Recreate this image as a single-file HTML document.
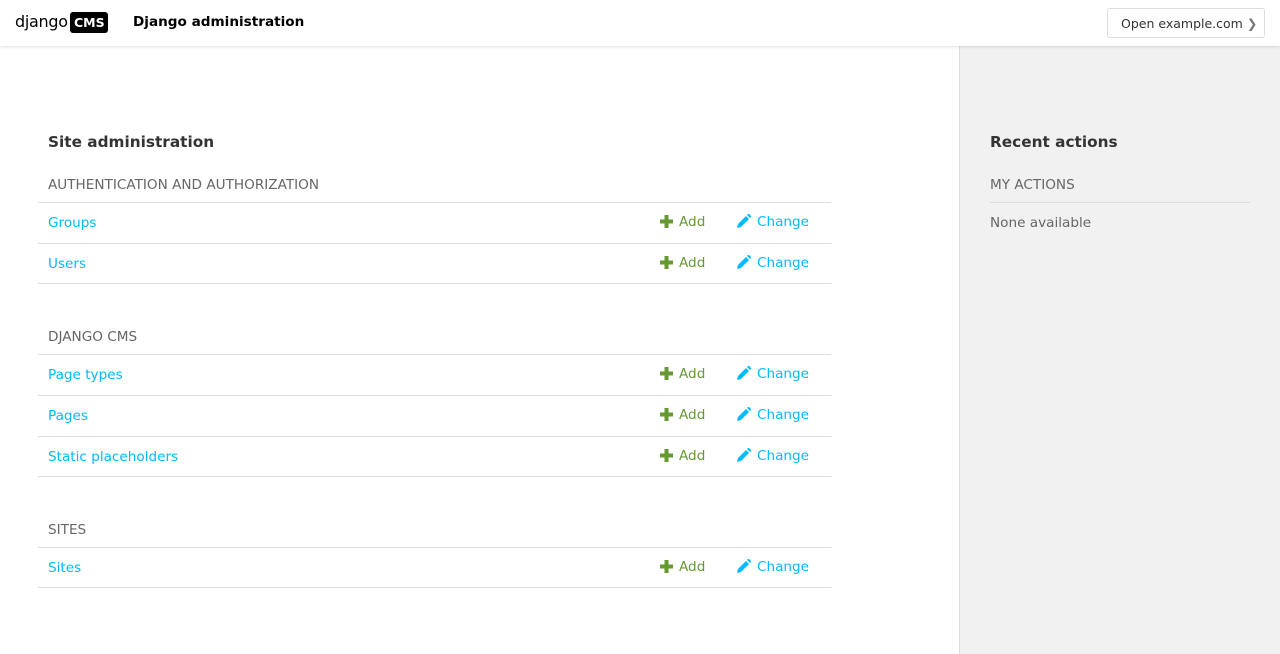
<!DOCTYPE html>
<html><head><meta charset="utf-8"><style>
*{margin:0;padding:0;box-sizing:border-box}
body{width:1280px;height:654px;overflow:hidden;font-family:"DejaVu Sans","Liberation Sans",sans-serif;background:#fff;position:relative;font-size:13.6px}
.hdr{position:absolute;left:0;top:0;width:1280px;height:46px;background:#fff;box-shadow:0 1px 3px rgba(0,0,0,.12);z-index:2}
.logo{position:absolute;left:15px;top:12px;font-size:16px;color:#000;letter-spacing:-0.3px}
.cms{position:absolute;left:70px;top:12px;background:#000;color:#fff;font-weight:bold;font-size:12.5px;padding:0 4px;border-radius:3px;height:21px;width:38px;line-height:21px;text-align:center}
.title{position:absolute;left:133px;top:14px;font-size:13.6px;font-weight:bold;color:#000}
.open{position:absolute;left:1107px;top:8px;width:158px;height:30px;border:1px solid #ddd;border-radius:3px;font-size:12.5px;color:#333;padding:7px 0 0 13px}
.side{position:absolute;left:959px;top:46px;width:321px;height:608px;background:#f1f1f1;border-left:1px solid #ddd}
h2{position:absolute;font-size:15.3px;font-weight:bold;color:#333}
.cap{position:absolute;font-size:13.6px;color:#666}
.row{position:absolute;left:38px;width:793px;height:41px;border-top:1px solid #ddd}
.row.last{border-bottom:1px solid #ddd}
.row a{position:absolute;left:10px;top:12px;color:#00bbff;font-size:13.6px}
.add{position:absolute;left:622px;top:12px;color:#693;font-size:13.6px}
.chg{position:absolute;left:699px;top:12px;color:#00bbff;font-size:13.6px}
svg{vertical-align:-2px;margin-right:6px}
</style></head><body>
<div class="hdr">
<div class="logo">django</div><div class="cms">CMS</div>
<div class="title">Django administration</div>
<div class="open">Open example.com <span style="font-weight:bold;color:#777">❯</span></div>
</div>
<div class="side"></div>
<h2 style="left:48px;top:133px">Site administration</h2>
<h2 style="left:990px;top:133px">Recent actions</h2>
<div class="cap" style="left:990px;top:177px">MY ACTIONS</div>
<div style="position:absolute;left:990px;top:202px;width:260px;border-top:1px solid #ddd"></div>
<div class="cap" style="left:990px;top:215px">None available</div>

<div class="cap" style="left:48px;top:177px">AUTHENTICATION AND AUTHORIZATION</div>
<div class="cap" style="left:48px;top:329px">DJANGO CMS</div>
<div class="cap" style="left:48px;top:522px">SITES</div>

<div class="row" style="top:202px"><a>Groups</a></div>
<div class="row last" style="top:243px"><a>Users</a></div>
<div class="row" style="top:354px"><a>Page types</a></div>
<div class="row" style="top:395px"><a>Pages</a></div>
<div class="row last" style="top:436px"><a>Static placeholders</a></div>
<div class="row last" style="top:547px"><a>Sites</a></div>

<script>
[202,243,354,395,436,547].forEach(function(t){
var r=document.createElement('div');r.className='row';r.style.top=t+'px';r.style.border='none';
r.innerHTML='<span class="add"><svg width="13" height="13" viewBox="0 0 13 13"><path d="M4.5 0h4v4.5H13v4H8.5V13h-4V8.5H0v-4h4.5z" fill="#693"/></svg>Add</span><span class="chg"><svg width="14" height="14" viewBox="0 0 14 14"><path d="M0 14l1-4 8-8 3 3-8 8zM10 1l1.5-1.5 3 3L13 4z" fill="#00bbff"/></svg>Change</span>';
document.body.appendChild(r);});
</script>
</body></html>
